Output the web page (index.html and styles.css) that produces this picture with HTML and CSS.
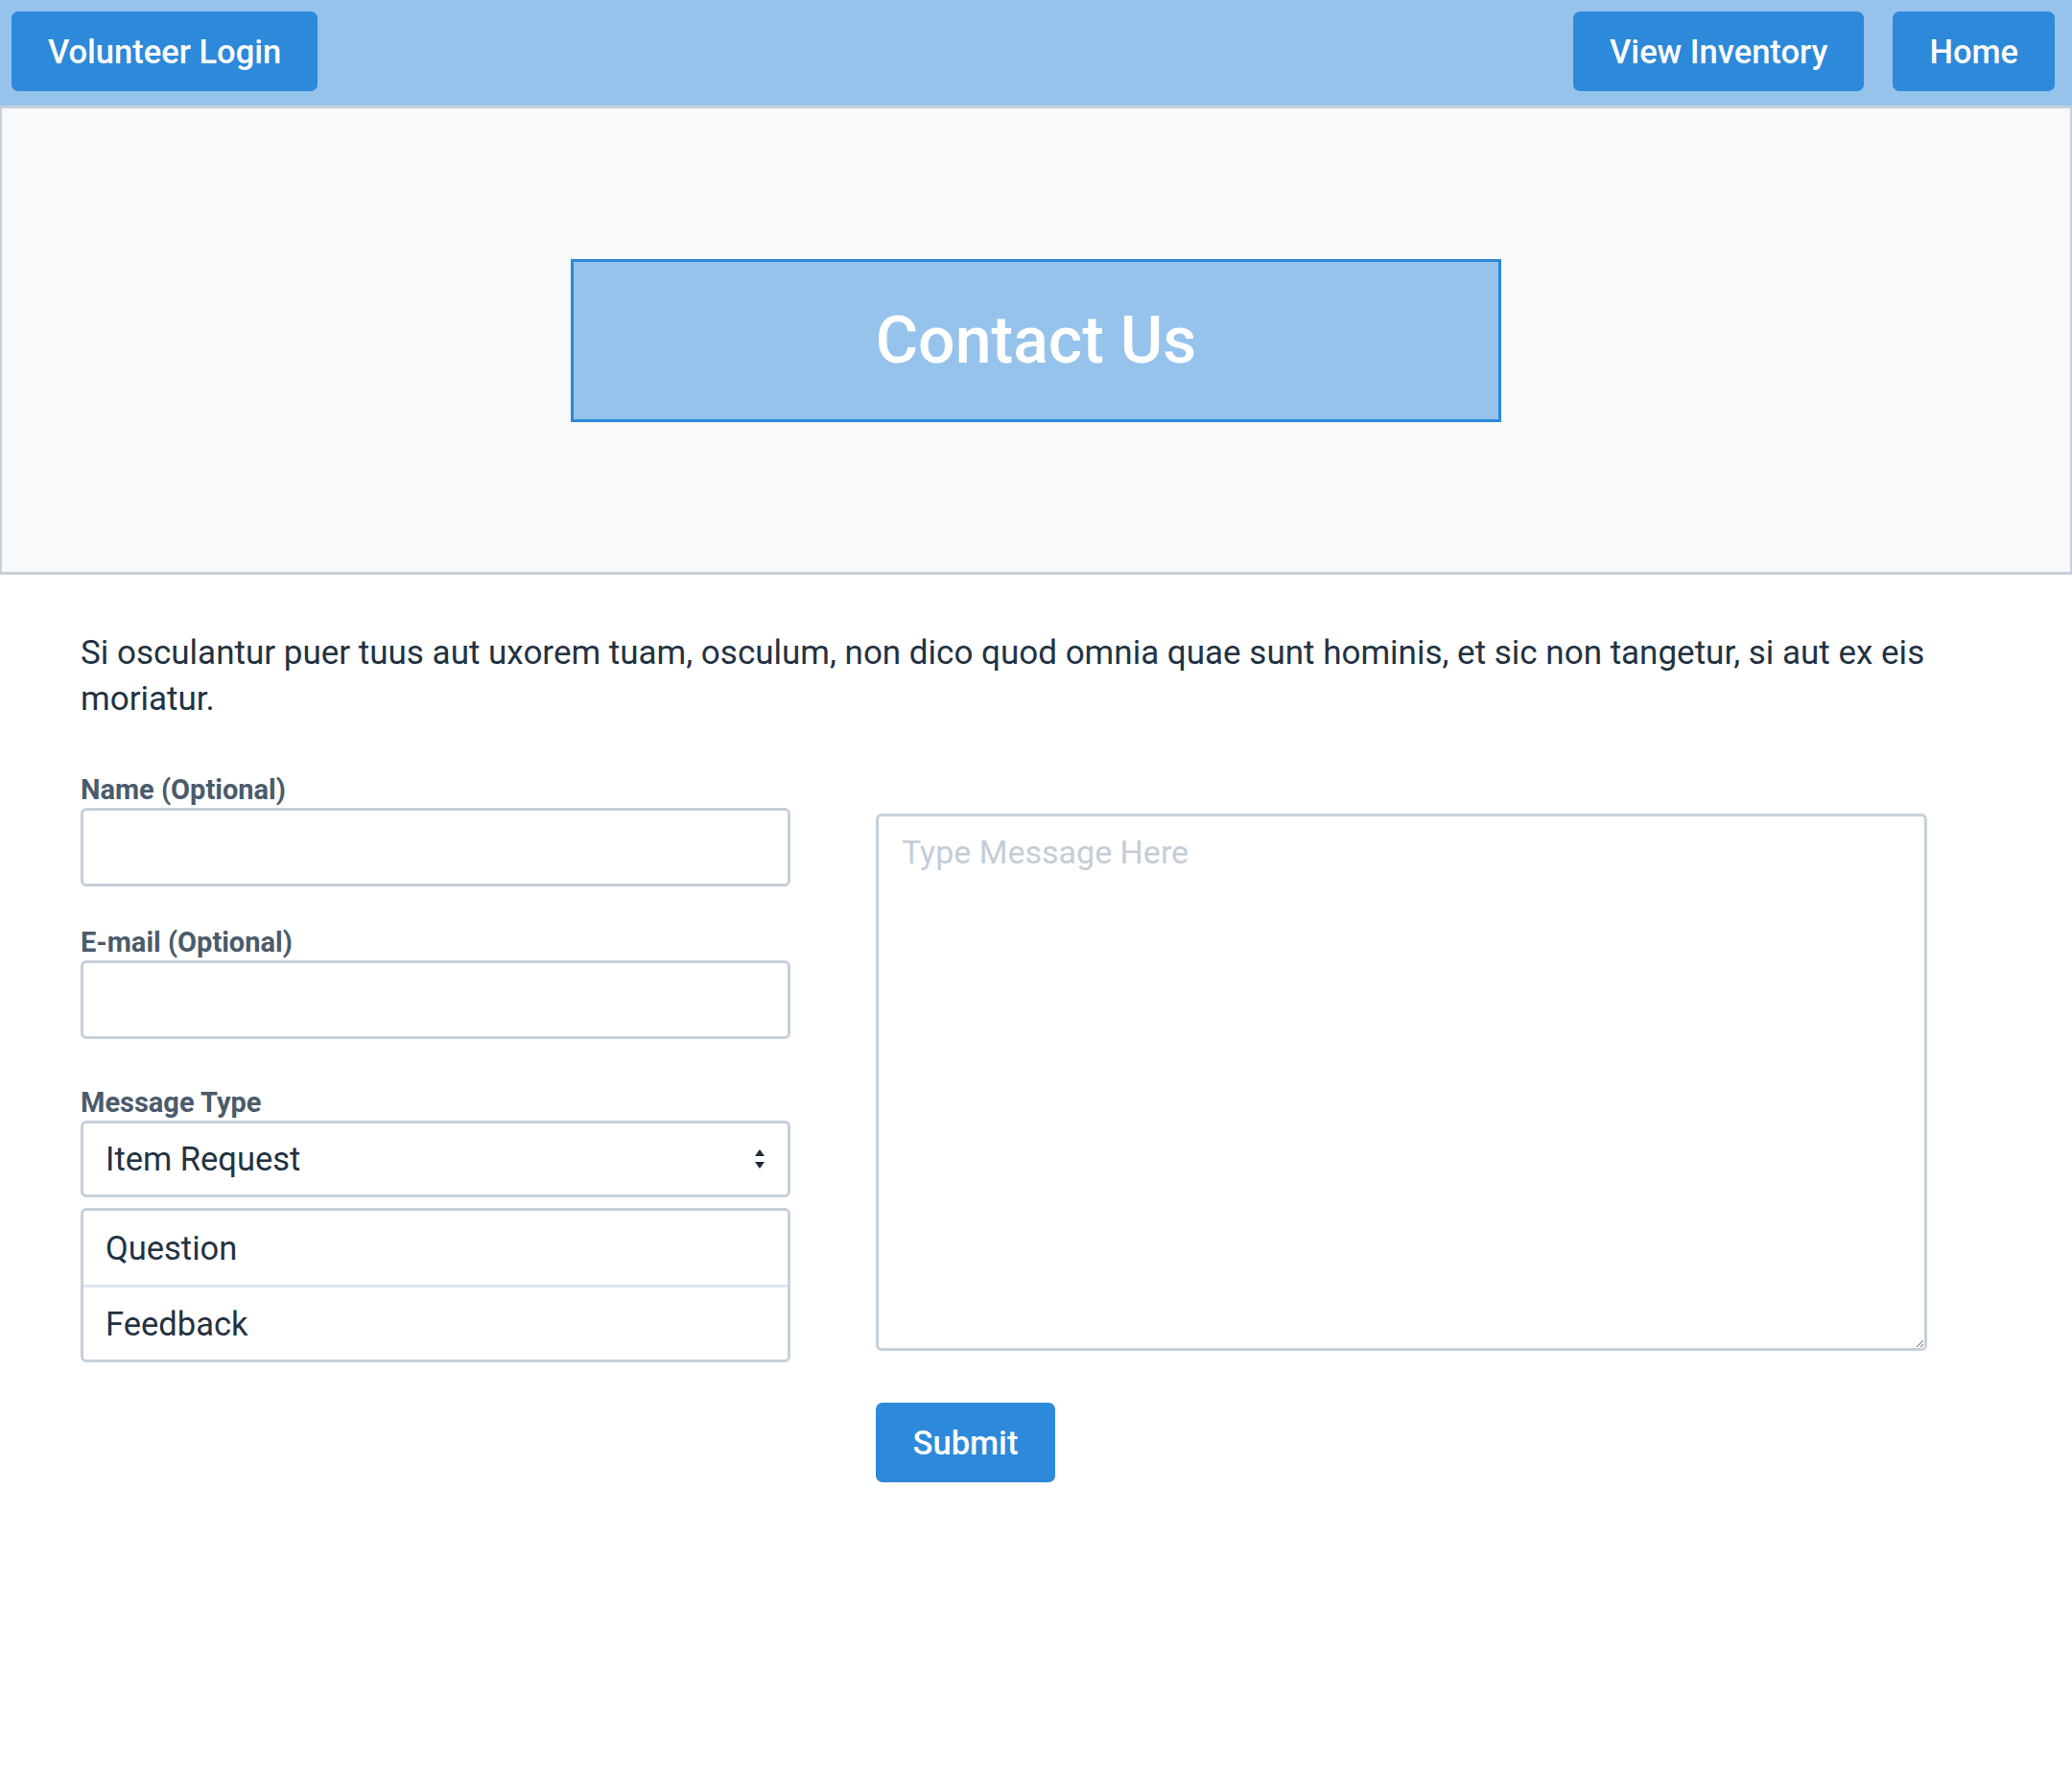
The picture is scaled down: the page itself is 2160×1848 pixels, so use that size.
FILE: index.html
```html
<!DOCTYPE html>
<html lang="en">
<head>
<meta charset="utf-8">
<title>Contact Us</title>
<link rel="stylesheet" href="styles.css">
</head>
<body>
<nav class="navbar">
  <button class="btn">Volunteer Login</button>
  <div class="nav-right">
    <button class="btn">View Inventory</button>
    <button class="btn">Home</button>
  </div>
</nav>
<header class="hero">
  <h1 class="hero-title">Contact Us</h1>
</header>
<main class="content">
  <p class="intro">Si osculantur puer tuus aut uxorem tuam, osculum, non dico quod omnia quae sunt hominis, et sic non tangetur, si aut ex eis moriatur.</p>
  <form class="contact-form">
    <div class="left-col">
      <label class="field-label" for="name">Name (Optional)</label>
      <input class="text-input" id="name" type="text">
      <label class="field-label email-label" for="email">E-mail (Optional)</label>
      <input class="text-input" id="email" type="email">
      <label class="field-label type-label" for="type">Message Type</label>
      <div class="select-wrap">
        <select class="select" id="type">
          <option>Item Request</option>
          <option>Question</option>
          <option>Feedback</option>
        </select>
        <svg class="select-arrows" width="12" height="22" viewBox="0 0 12 22" aria-hidden="true">
          <path d="M6 1 L11 8 L1 8 Z" fill="#1f2b38"/>
          <path d="M6 21 L11 14 L1 14 Z" fill="#1f2b38"/>
        </svg>
      </div>
      <ul class="option-list">
        <li class="option-item">Question</li>
        <li class="option-item">Feedback</li>
      </ul>
    </div>
    <div class="right-col">
      <textarea class="message" placeholder="Type Message Here"></textarea>
      <button class="btn submit" type="button">Submit</button>
    </div>
  </form>
</main>
</body>
</html>
```
FILE: styles.css
```css
* { box-sizing: border-box; }

html, body {
  margin: 0;
  padding: 0;
  background: #ffffff;
  font-family: Roboto, "Liberation Sans", Arial, sans-serif;
  color: #233242;
}

.navbar {
  display: flex;
  justify-content: space-between;
  align-items: flex-start;
  height: 110px;
  padding: 12px 18px 0 12px;
  background: #96c3ec;
}

.nav-right {
  display: flex;
  gap: 30px;
}

.btn {
  display: inline-flex;
  align-items: center;
  justify-content: center;
  height: 83px;
  padding: 0 38px;
  border: none;
  border-radius: 7px;
  background: #2d89da;
  color: #ffffff;
  font-family: Roboto, "Liberation Sans", Arial, sans-serif;
  font-size: 34.5px;
  font-weight: 500;
  cursor: pointer;
}

.hero {
  display: flex;
  align-items: center;
  justify-content: center;
  height: 489px;
  background: #f7f9fb;
  border-top: 3px solid #c5d0da;
  border-bottom: 3px solid #c5d0da;
  border-left: 2px solid #c5d0da;
  border-right: 2px solid #c5d0da;
}

.hero-title {
  display: flex;
  align-items: center;
  justify-content: center;
  width: 970px;
  height: 170px;
  margin: 0;
  background: #96c3ec;
  border: 3px solid #2d89da;
  color: #ffffff;
  font-size: 68px;
  font-weight: 500;
}

.content {
  padding: 0 84px;
}

.intro {
  margin: 58px 0 0;
  font-size: 35px;
  line-height: 47.5px;
  color: #233242;
  max-width: 1992px;
}

.contact-form {
  display: grid;
  grid-template-columns: 740px 1096px;
  column-gap: 89px;
  align-items: start;
  margin-top: 56px;
}

.left-col {
  display: flex;
  flex-direction: column;
}

.field-label {
  display: block;
  font-size: 29px;
  line-height: 31px;
  font-weight: 700;
  color: #4b5b6b;
  margin-bottom: 3px;
}

.email-label { margin-top: 43px; }
.type-label { margin-top: 51px; }

.text-input {
  width: 740px;
  height: 82px;
  border: 3px solid #c5d0da;
  border-radius: 6px;
  background: #ffffff;
  font-size: 35px;
  padding: 0 24px;
  font-family: inherit;
}

.select-wrap {
  position: relative;
  width: 740px;
}

.select {
  width: 740px;
  height: 80px;
  appearance: none;
  -webkit-appearance: none;
  border: 3px solid #c5d0da;
  border-radius: 6px;
  background: #ffffff;
  color: #233242;
  font-family: inherit;
  font-size: 34.5px;
  padding: 0 23px;
}

.select-arrows {
  position: absolute;
  right: 26px;
  top: 29px;
  pointer-events: none;
}

.option-list {
  list-style: none;
  margin: 11px 0 0;
  padding: 0;
  width: 740px;
  border: 3px solid #c5d0da;
  border-radius: 6px;
  background: #ffffff;
}

.option-item {
  height: 77px;
  display: flex;
  align-items: center;
  padding: 0 23px;
  font-size: 34.5px;
  color: #233242;
}

.option-item + .option-item {
  border-top: 3px solid #dfe6ee;
  height: 78px;
}

.right-col {
  display: flex;
  flex-direction: column;
  align-items: flex-start;
  margin-top: 40px;
}

.message {
  width: 1096px;
  height: 560px;
  border: 3px solid #c5d0da;
  border-radius: 6px;
  padding: 16px 24px;
  font-family: inherit;
  font-size: 34px;
  line-height: 42px;
  color: #233242;
  background: #ffffff;
}

.message::placeholder {
  color: #c3cdd7;
}

.submit {
  margin-top: 54px;
  width: 187px;
  padding: 0;
}
```
